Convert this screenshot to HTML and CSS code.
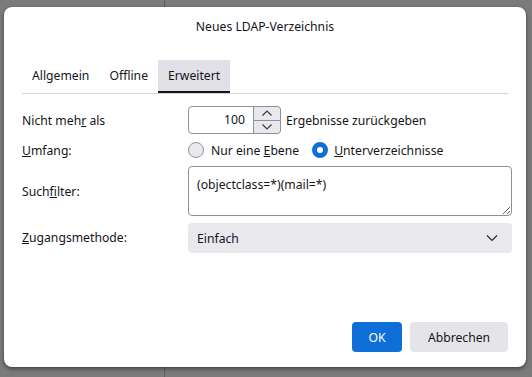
FILE: index.html
```html
<!DOCTYPE html>
<html lang="de">
<head>
  <meta charset="UTF-8" />
  <title>Neues LDAP-Verzeichnis</title>
  <link rel="stylesheet" href="styles.css">
</head>
<body>
  <div class="dialog">
    <div class="dialog-title">Neues LDAP-Verzeichnis</div>

    <div class="tabs">
      <button class="tab">Allgemein</button>
      <button class="tab">Offline</button>
      <button class="tab selected">Erweitert</button>
    </div>

    <div class="form">
      <label class="form-label"><span>Nicht meh<u>r</u> als</span></label>
      <div class="form-field">
        <div class="number">
          <div class="number-value">100</div>
          <div class="spin">
            <div class="spin-btn">
              <svg width="12" height="8" viewBox="0 0 12 8"><path d="M1.5 6.5 L6 2 L10.5 6.5" fill="none" stroke="#3b3b3b" stroke-width="1.2"/></svg>
            </div>
            <div class="spin-btn">
              <svg width="12" height="8" viewBox="0 0 12 8"><path d="M1.5 1.5 L6 6 L10.5 1.5" fill="none" stroke="#3b3b3b" stroke-width="1.2"/></svg>
            </div>
          </div>
        </div>
        <span class="after-text">Ergebnisse zurückgeben</span>
      </div>

      <label class="form-label"><span><u>U</u>mfang:</span></label>
      <div class="form-field radios">
        <span class="radio"><span class="radio-dot"></span><span>Nur eine <u>E</u>bene</span></span>
        <span class="radio"><span class="radio-dot checked"></span><span><u>U</u>nterverzeichnisse</span></span>
      </div>

      <label class="form-label"><span>Such<u>f</u>ilter:</span></label>
      <div class="form-field wide">
        <textarea class="filter">(objectclass=*)(mail=*)</textarea>
      </div>

      <label class="form-label"><span><u>Z</u>ugangsmethode:</span></label>
      <div class="form-field wide">
        <div class="select">
          <span>Einfach</span>
          <svg width="12" height="8" viewBox="0 0 12 8"><path d="M1 1.5 L6 6.5 L11 1.5" fill="none" stroke="#2b2a33" stroke-width="1.2"/></svg>
        </div>
      </div>
    </div>

    <div class="dialog-buttons">
      <button class="btn primary">OK</button>
      <button class="btn cancel">Abbrechen</button>
    </div>
  </div>
</body>
</html>
```

FILE: styles.css
```css
* { box-sizing: border-box; }
html, body {
  margin: 0;
  width: 532px;
  height: 377px;
  overflow: hidden;
}
body {
  background-color: #7b7b7b;
  background-image: linear-gradient(to right, transparent 164px, #5e5e5e 164px, #5e5e5e 165px, transparent 165px);
  font-family: 'Noto Sans', 'Open Sans', sans-serif;
  font-size: 12.2px;
  color: #15141a;
  position: relative;
}

.dialog {
  position: absolute;
  left: 4px;
  top: 7px;
  width: 522px;
  height: 360px;
  background: #fff;
  border-radius: 8px;
  box-shadow: 0 2px 4px rgba(0,0,0,0.45), 0 0 1px rgba(0,0,0,0.4);
  padding: 0 18px 15px 18px;
  display: flex;
  flex-direction: column;
}
.dialog-title {
  text-align: center;
  line-height: 16px;
  padding-top: 12px;
  margin-bottom: 25px;
}
.tabs {
  display: flex;
  border-bottom: 1px solid #d4d4d8;
}
.tab {
  font: inherit;
  color: inherit;
  background: none;
  border: none;
  border-bottom: 2px solid transparent;
  height: 33px;
  padding: 0 10px;
  margin: 0;
}
.tab.selected {
  background: #e0e0e6;
  border-bottom-color: #15141a;
}
.form {
  display: grid;
  grid-template-columns: 166px 1fr;
  grid-template-rows: 28px 20px 50px 31px;
  row-gap: 6px;
  margin-top: 12px;
  margin-right: -4px;
}
.form-label {
  display: flex;
  align-items: center;
}
.form-field {
  display: flex;
  align-items: center;
}
.form-field.wide { align-items: stretch; }
.form-field.wide:last-child { margin-top: 1px; }
.number {
  display: flex;
  width: 93px;
  height: 28px;
  border: 1px solid #8f8f9d;
  border-radius: 4px;
}
.number-value {
  flex: 1;
  text-align: right;
  padding-right: 8px;
  line-height: 26px;
}
.spin {
  width: 28px;
  display: flex;
  flex-direction: column;
  border: 1px solid #8f8f9d;
  margin: -1px -1px -1px 0;
  border-radius: 0 4px 4px 0;
  overflow: hidden;
}
.spin-btn {
  flex: 1;
  background: #e9e9ed;
  display: flex;
  align-items: center;
  justify-content: center;
}
.spin-btn + .spin-btn { border-top: 1px solid #8f8f9d; }
.after-text { margin-left: 5px; }
.radio {
  display: flex;
  align-items: center;
  margin-right: 14px;
}
.radio-dot {
  width: 16px;
  height: 16px;
  border-radius: 50%;
  border: 1px solid #8f8f9d;
  background: #e9e9ed;
  margin-right: 7px;
}
.radio-dot.checked {
  border: 5px solid #0f6fd8;
  background: #fff;
  margin-left: -1px;
  margin-right: 6px;
}
.filter {
  width: 100%;
  height: 50px;
  font: inherit;
  color: inherit;
  border: 1px solid #8f8f9d;
  border-radius: 4px;
  padding: 9px 8px;
  resize: both;
}
.select {
  width: 100%;
  background: #e9e9ed;
  border-radius: 4px;
  display: flex;
  align-items: center;
  justify-content: space-between;
  padding: 0 14px 0 9px;
}
.dialog-buttons {
  margin-top: auto;
  display: flex;
  justify-content: flex-end;
  gap: 8px;
}
.btn {
  font: inherit;
  color: #15141a;
  background: #e5e5e9;
  border: none;
  border-radius: 4px;
  height: 30px;
  padding: 0;
  width: 50px;
}
.btn.cancel { width: 98px; }
.btn.primary {
  background: #0f6fd8;
  color: #fff;
}
```
